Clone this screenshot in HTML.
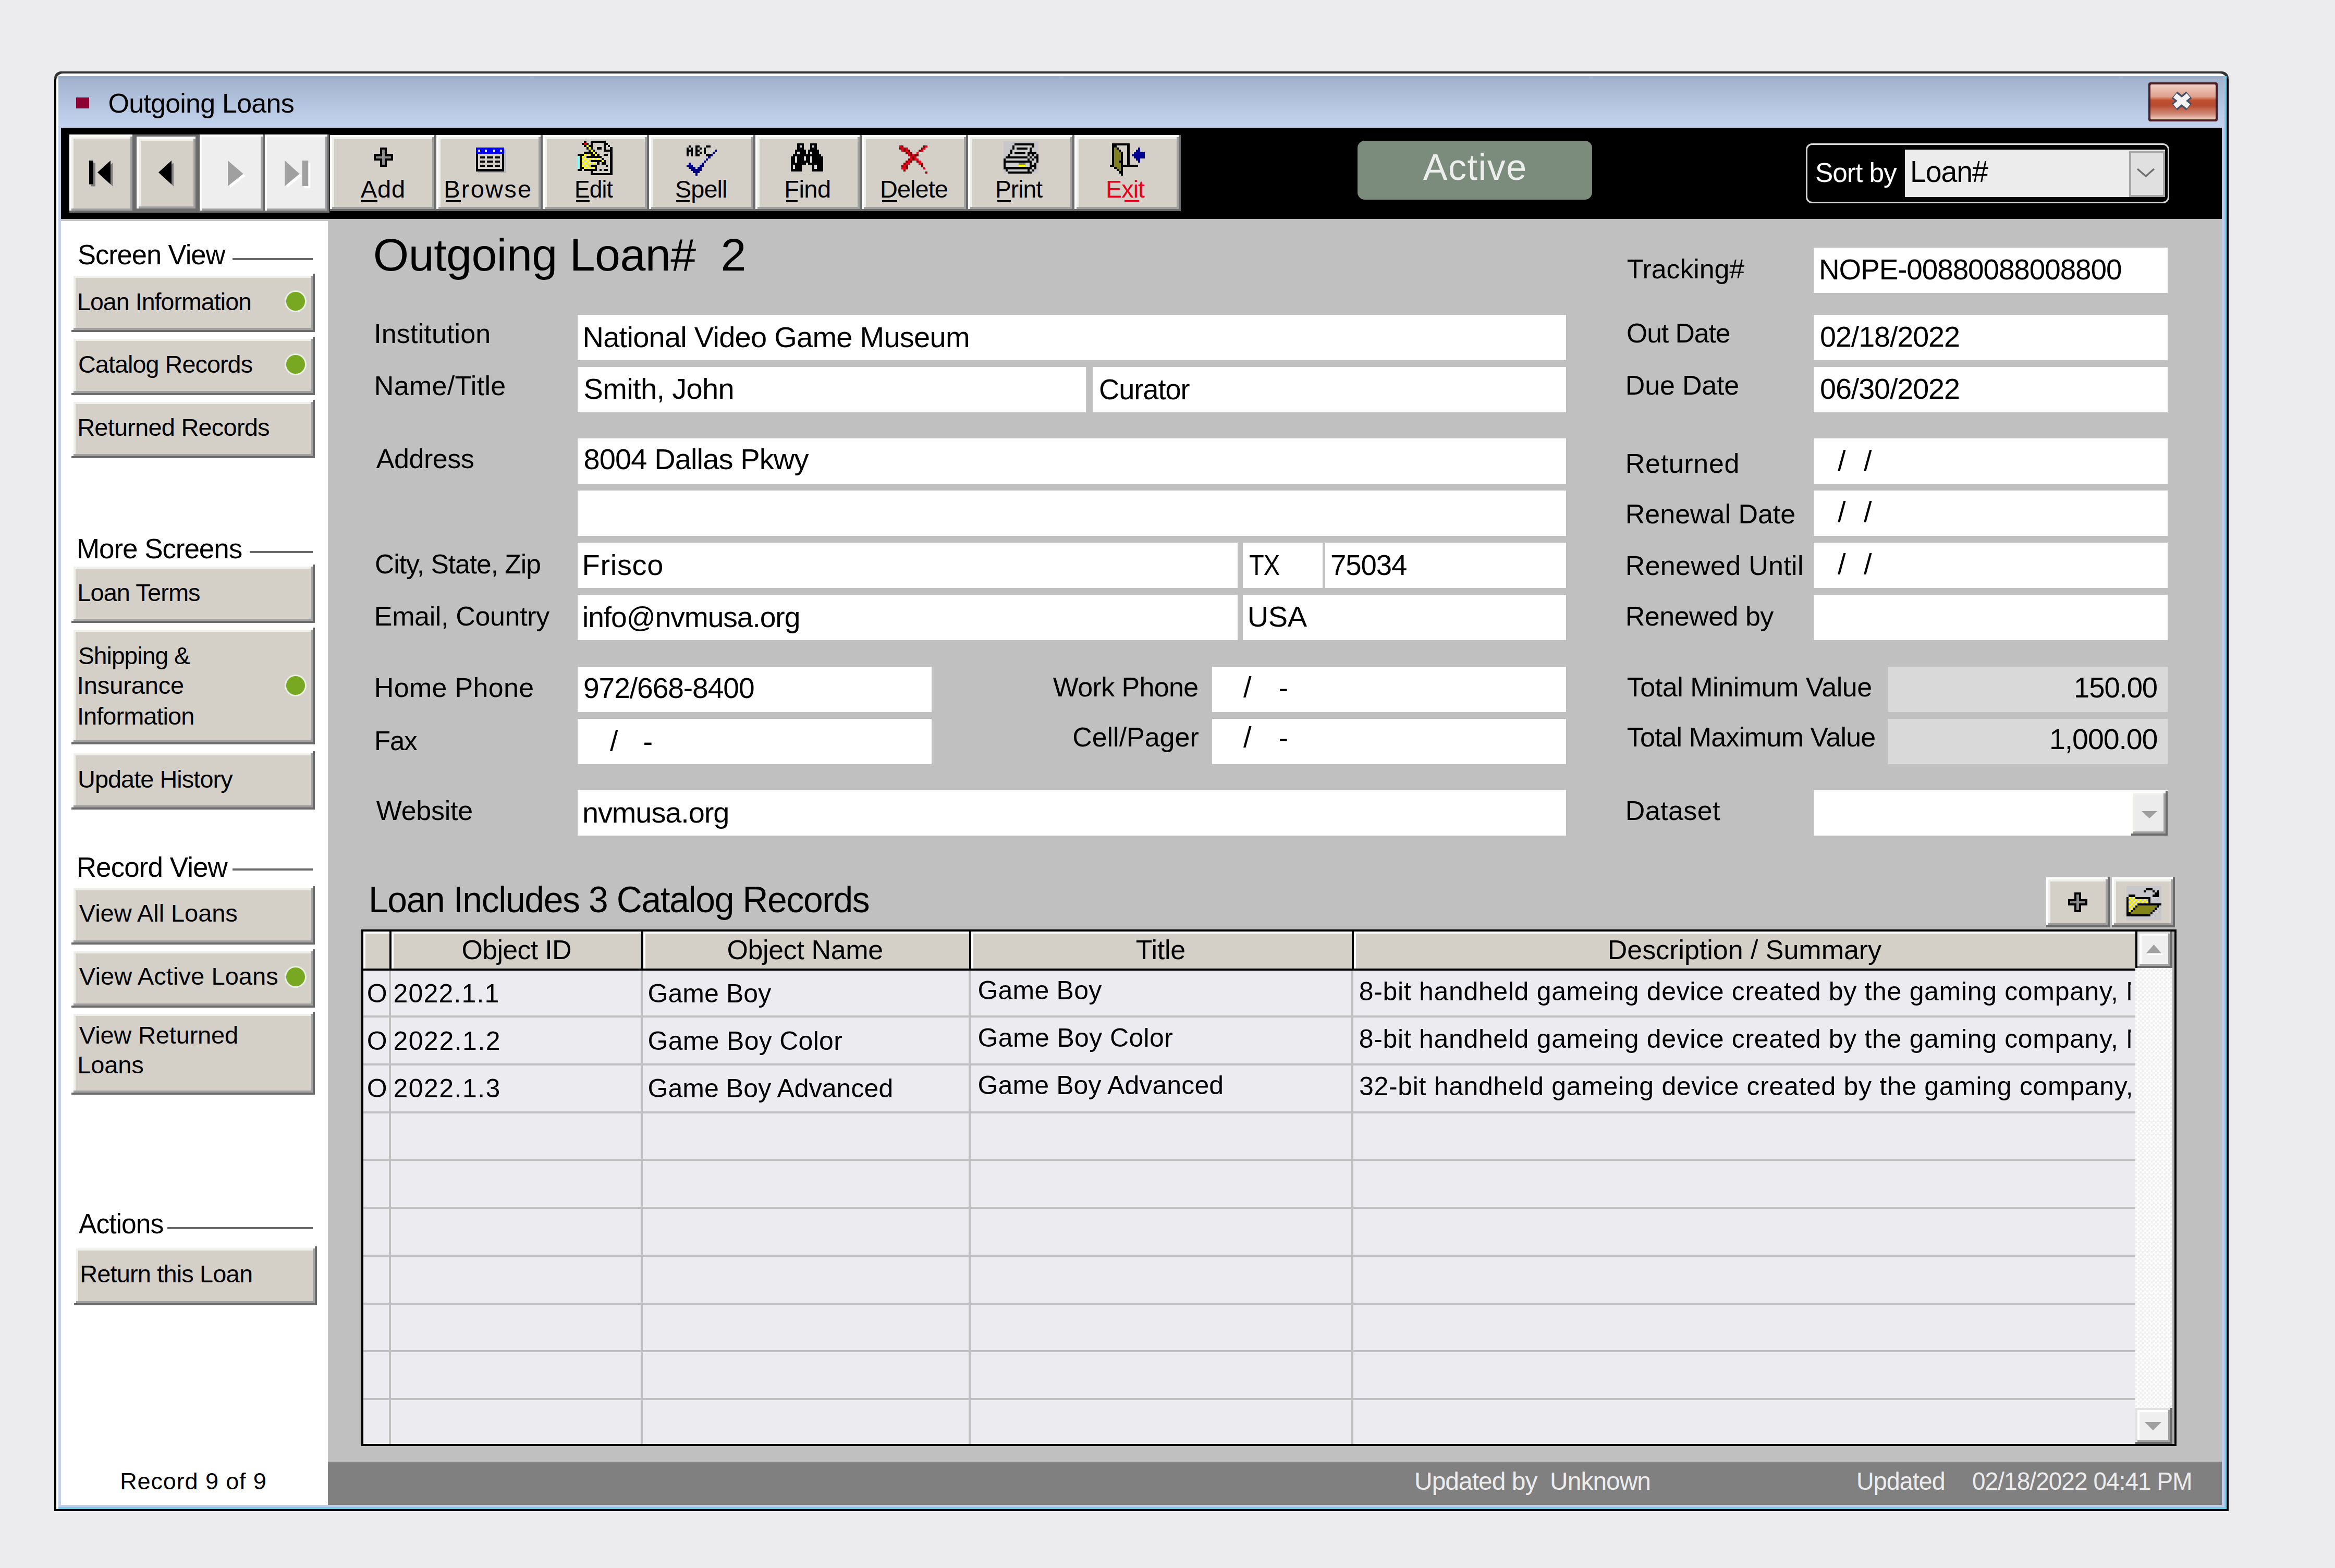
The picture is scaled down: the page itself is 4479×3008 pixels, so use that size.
<!DOCTYPE html>
<html><head><meta charset="utf-8"><style>
html,body{margin:0;padding:0;}
body{width:4479px;height:3008px;position:relative;overflow:hidden;background:#ececef;font-family:"Liberation Sans",sans-serif;}
.b{position:absolute;box-sizing:border-box;}
.t{position:absolute;line-height:1;white-space:nowrap;}
.t, .b .t{position:absolute;}
</style></head><body>
<div class="b" style="left:104px;top:137px;width:4171px;height:2762px;background:#000;border-radius:17px 17px 0 0;"></div>
<div class="b" style="left:104px;top:137px;width:4171px;height:13px;background:#333;border-radius:17px 17px 0 0;"></div>
<div class="b" style="left:108px;top:141px;width:4163px;height:2754px;background:#fff;border-radius:13px 13px 0 0;"></div>
<div class="b" style="left:112px;top:146px;width:4159px;height:2749px;background:#76cce6;"></div>
<div class="b" style="left:112px;top:146px;width:4155px;height:2745px;background:#c2cfec;"></div>
<div class="b" style="left:112px;top:146px;width:4155px;height:99px;background:linear-gradient(#a0b1cc,#c4d4ee);"></div>
<div class="b" style="left:117px;top:245px;width:4145px;height:175px;background:#000;"></div>
<div class="b" style="left:117px;top:420px;width:512px;height:2467px;background:#fff;"></div>
<div class="b" style="left:117px;top:420px;width:512px;height:4px;background:#c4c4c4;"></div>
<div class="b" style="left:629px;top:420px;width:3633px;height:2384px;background:#c0c0c0;"></div>
<div class="b" style="left:629px;top:2804px;width:3633px;height:83px;background:#808080;"></div>
<div class="b" style="left:146px;top:187px;width:25px;height:21px;background:#8c0032;"></div>
<div class="t" style="left:207.5px;top:172px;font-size:52px;letter-spacing:-0.77px;color:#000;">Outgoing Loans</div>
<div class="b" style="left:4121px;top:158px;width:133px;height:75px;background:#4a1c24;border-radius:4px;"></div>
<div class="b" style="left:4125px;top:162px;width:125px;height:67px;background:linear-gradient(#f2d0c4 0%,#dea08c 35%,#c05030 45%,#b84c30 60%,#d08a78 85%,#f0d0c0 100%);border-radius:2px;"></div>
<div class="b" style="left:133px;top:258px;width:125px;height:150px;background:#d4d0c8;box-shadow:inset -4px -4px 0 #6b6b6b, inset 4px 4px 0 #fff, inset -8px -8px 0 #a0a0a0, inset 8px 8px 0 #f0f0ea;"></div>
<div class="b" style="left:254px;top:258px;width:129px;height:150px;background:#6b6b6b;"></div>
<div class="b" style="left:262px;top:262px;width:117px;height:142px;background:#d4d0c8;box-shadow:inset -4px -4px 0 #6b6b6b, inset 4px 4px 0 #fff, inset -8px -8px 0 #a0a0a0, inset 8px 8px 0 #f0f0ea;"></div>
<div class="b" style="left:383px;top:258px;width:125px;height:150px;background:#eeeeee;box-shadow:inset -4px -4px 0 #6b6b6b, inset 4px 4px 0 #fff, inset -8px -8px 0 #a0a0a0, inset 8px 8px 0 #eeeeee;"></div>
<div class="b" style="left:508px;top:258px;width:124px;height:150px;background:#eeeeee;box-shadow:inset -4px -4px 0 #6b6b6b, inset 4px 4px 0 #fff, inset -8px -8px 0 #a0a0a0, inset 8px 8px 0 #eeeeee;"></div>
<div class="b" style="left:633px;top:259px;width:204px;height:146px;background:#d4d0c8;box-shadow:inset -4px -4px 0 #6b6b6b, inset 4px 4px 0 #fff, inset -8px -8px 0 #a0a0a0, inset 8px 8px 0 #f0f0ea;"></div>
<div class="b" style="left:837px;top:259px;width:204px;height:146px;background:#d4d0c8;box-shadow:inset -4px -4px 0 #6b6b6b, inset 4px 4px 0 #fff, inset -8px -8px 0 #a0a0a0, inset 8px 8px 0 #f0f0ea;"></div>
<div class="b" style="left:1041px;top:259px;width:204px;height:146px;background:#d4d0c8;box-shadow:inset -4px -4px 0 #6b6b6b, inset 4px 4px 0 #fff, inset -8px -8px 0 #a0a0a0, inset 8px 8px 0 #f0f0ea;"></div>
<div class="b" style="left:1245px;top:259px;width:204px;height:146px;background:#d4d0c8;box-shadow:inset -4px -4px 0 #6b6b6b, inset 4px 4px 0 #fff, inset -8px -8px 0 #a0a0a0, inset 8px 8px 0 #f0f0ea;"></div>
<div class="b" style="left:1449px;top:259px;width:204px;height:146px;background:#d4d0c8;box-shadow:inset -4px -4px 0 #6b6b6b, inset 4px 4px 0 #fff, inset -8px -8px 0 #a0a0a0, inset 8px 8px 0 #f0f0ea;"></div>
<div class="b" style="left:1653px;top:259px;width:204px;height:146px;background:#d4d0c8;box-shadow:inset -4px -4px 0 #6b6b6b, inset 4px 4px 0 #fff, inset -8px -8px 0 #a0a0a0, inset 8px 8px 0 #f0f0ea;"></div>
<div class="b" style="left:1857px;top:259px;width:204px;height:146px;background:#d4d0c8;box-shadow:inset -4px -4px 0 #6b6b6b, inset 4px 4px 0 #fff, inset -8px -8px 0 #a0a0a0, inset 8px 8px 0 #f0f0ea;"></div>
<div class="b" style="left:2061px;top:259px;width:204px;height:146px;background:#d4d0c8;box-shadow:inset -4px -4px 0 #6b6b6b, inset 4px 4px 0 #fff, inset -8px -8px 0 #a0a0a0, inset 8px 8px 0 #f0f0ea;"></div>
<div class="t" style="left:691.8px;top:339px;font-size:47px;letter-spacing:0.88px;color:#000;">Add</div>
<div class="t" style="left:851.2px;top:339px;font-size:47px;letter-spacing:2.25px;color:#000;">Browse</div>
<div class="t" style="left:1101.5px;top:339px;font-size:47px;letter-spacing:-0.94px;color:#000;transform:scaleX(0.9437);transform-origin:0 0;">Edit</div>
<div class="t" style="left:1294.8px;top:339px;font-size:47px;letter-spacing:-0.94px;color:#000;transform:scaleX(0.9975);transform-origin:0 0;">Spell</div>
<div class="t" style="left:1504.2px;top:339px;font-size:47px;letter-spacing:-0.50px;color:#000;">Find</div>
<div class="t" style="left:1688.3px;top:339px;font-size:47px;letter-spacing:-0.94px;color:#000;transform:scaleX(0.9976);transform-origin:0 0;">Delete</div>
<div class="t" style="left:1909.3px;top:339px;font-size:47px;letter-spacing:-0.94px;color:#000;transform:scaleX(0.9804);transform-origin:0 0;">Print</div>
<div class="t" style="left:2121.3px;top:339px;font-size:47px;letter-spacing:-0.94px;color:#e8001c;transform:scaleX(0.9940);transform-origin:0 0;">Exit</div>
<div class="b" style="left:2604px;top:270px;width:450px;height:113px;background:#7b8c7c;border-radius:14px;"></div>
<div class="t" style="left:2729.8px;top:286px;font-size:70px;letter-spacing:1.55px;color:#eceeec;">Active</div>
<div class="b" style="left:3464px;top:275px;width:697px;height:115px;border:3px solid #d8d8d8;border-radius:12px;box-sizing:border-box;"></div>
<div class="t" style="left:3481.5px;top:305px;font-size:52px;letter-spacing:-1.04px;color:#fff;transform:scaleX(0.9887);transform-origin:0 0;">Sort by</div>
<div class="b" style="left:3654px;top:287px;width:499px;height:91px;background:#ececec;"></div>
<div class="b" style="left:4084px;top:290px;width:69px;height:88px;background:#e0e0e0;border:4px solid #a8a8a8;box-sizing:border-box;"></div>
<div class="t" style="left:3663.5px;top:300px;font-size:58px;letter-spacing:-1.16px;color:#000;transform:scaleX(0.9564);transform-origin:0 0;">Loan#</div>
<div class="t" style="left:148.5px;top:462px;font-size:53px;letter-spacing:-1.06px;color:#000;transform:scaleX(0.9907);transform-origin:0 0;">Screen View</div>
<div class="b" style="left:446px;top:495px;width:154px;height:4px;background:#696969;"></div>
<div class="t" style="left:146.8px;top:1026px;font-size:53px;letter-spacing:-1.06px;color:#000;transform:scaleX(0.9997);transform-origin:0 0;">More Screens</div>
<div class="b" style="left:479px;top:1057px;width:121px;height:4px;background:#696969;"></div>
<div class="t" style="left:146.8px;top:1637px;font-size:53px;letter-spacing:-0.95px;color:#000;">Record View</div>
<div class="b" style="left:446px;top:1666px;width:154px;height:4px;background:#696969;"></div>
<div class="t" style="left:150.8px;top:2321px;font-size:53px;letter-spacing:-1.06px;color:#000;transform:scaleX(0.9749);transform-origin:0 0;">Actions</div>
<div class="b" style="left:321px;top:2354px;width:279px;height:4px;background:#696969;"></div>
<div class="b" style="left:137px;top:525px;width:467px;height:112px;background:#d4d0c8;box-shadow:inset -4px -4px 0 #6b6b6b, inset 4px 4px 0 #fff, inset -8px -8px 0 #a0a0a0, inset 8px 8px 0 #f0f0ea;"></div>
<div class="t" style="left:148.3px;top:555px;font-size:47px;letter-spacing:-0.94px;color:#000;transform:scaleX(0.9890);transform-origin:0 0;">Loan Information</div>
<div class="b" style="left:549px;top:560px;width:36px;height:36px;background:#78a822;border-radius:50%;box-shadow:0 0 0 3px rgba(240,250,235,0.75);"></div>
<div class="b" style="left:137px;top:646px;width:467px;height:112px;background:#d4d0c8;box-shadow:inset -4px -4px 0 #6b6b6b, inset 4px 4px 0 #fff, inset -8px -8px 0 #a0a0a0, inset 8px 8px 0 #f0f0ea;"></div>
<div class="t" style="left:149.8px;top:675px;font-size:47px;letter-spacing:-0.94px;color:#000;transform:scaleX(0.9945);transform-origin:0 0;">Catalog Records</div>
<div class="b" style="left:549px;top:681px;width:36px;height:36px;background:#78a822;border-radius:50%;box-shadow:0 0 0 3px rgba(240,250,235,0.75);"></div>
<div class="b" style="left:137px;top:767px;width:467px;height:112px;background:#d4d0c8;box-shadow:inset -4px -4px 0 #6b6b6b, inset 4px 4px 0 #fff, inset -8px -8px 0 #a0a0a0, inset 8px 8px 0 #f0f0ea;"></div>
<div class="t" style="left:148.2px;top:796px;font-size:47px;letter-spacing:-0.80px;color:#000;">Returned Records</div>
<div class="b" style="left:137px;top:1083px;width:467px;height:112px;background:#d4d0c8;box-shadow:inset -4px -4px 0 #6b6b6b, inset 4px 4px 0 #fff, inset -8px -8px 0 #a0a0a0, inset 8px 8px 0 #f0f0ea;"></div>
<div class="t" style="left:148.2px;top:1113px;font-size:47px;letter-spacing:-0.92px;color:#000;">Loan Terms</div>
<div class="b" style="left:137px;top:1204px;width:467px;height:224px;background:#d4d0c8;box-shadow:inset -4px -4px 0 #6b6b6b, inset 4px 4px 0 #fff, inset -8px -8px 0 #a0a0a0, inset 8px 8px 0 #f0f0ea;"></div>
<div class="t" style="left:149.8px;top:1234px;font-size:47px;letter-spacing:-0.94px;color:#000;transform:scaleX(0.9813);transform-origin:0 0;">Shipping &amp;</div>
<div class="t" style="left:147.8px;top:1291px;font-size:47px;letter-spacing:-0.12px;color:#000;">Insurance</div>
<div class="t" style="left:147.8px;top:1350px;font-size:47px;letter-spacing:-0.94px;color:#000;transform:scaleX(0.9984);transform-origin:0 0;">Information</div>
<div class="b" style="left:549px;top:1297px;width:36px;height:36px;background:#78a822;border-radius:50%;box-shadow:0 0 0 3px rgba(240,250,235,0.75);"></div>
<div class="b" style="left:137px;top:1441px;width:467px;height:112px;background:#d4d0c8;box-shadow:inset -4px -4px 0 #6b6b6b, inset 4px 4px 0 #fff, inset -8px -8px 0 #a0a0a0, inset 8px 8px 0 #f0f0ea;"></div>
<div class="t" style="left:148.5px;top:1471px;font-size:47px;letter-spacing:-0.94px;color:#000;transform:scaleX(0.9965);transform-origin:0 0;">Update History</div>
<div class="b" style="left:137px;top:1700px;width:467px;height:112px;background:#d4d0c8;box-shadow:inset -4px -4px 0 #6b6b6b, inset 4px 4px 0 #fff, inset -8px -8px 0 #a0a0a0, inset 8px 8px 0 #f0f0ea;"></div>
<div class="t" style="left:151.8px;top:1728px;font-size:47px;letter-spacing:-0.06px;color:#000;">View All Loans</div>
<div class="b" style="left:137px;top:1821px;width:467px;height:112px;background:#d4d0c8;box-shadow:inset -4px -4px 0 #6b6b6b, inset 4px 4px 0 #fff, inset -8px -8px 0 #a0a0a0, inset 8px 8px 0 #f0f0ea;"></div>
<div class="t" style="left:151.8px;top:1849px;font-size:47px;letter-spacing:0.09px;color:#000;">View Active Loans</div>
<div class="b" style="left:549px;top:1856px;width:36px;height:36px;background:#78a822;border-radius:50%;box-shadow:0 0 0 3px rgba(240,250,235,0.75);"></div>
<div class="b" style="left:137px;top:1941px;width:467px;height:159px;background:#d4d0c8;box-shadow:inset -4px -4px 0 #6b6b6b, inset 4px 4px 0 #fff, inset -8px -8px 0 #a0a0a0, inset 8px 8px 0 #f0f0ea;"></div>
<div class="t" style="left:151.8px;top:1962px;font-size:47px;letter-spacing:-0.17px;color:#000;">View Returned</div>
<div class="t" style="left:148.2px;top:2019px;font-size:47px;letter-spacing:-0.12px;color:#000;">Loans</div>
<div class="b" style="left:142px;top:2391px;width:466px;height:113px;background:#d4d0c8;box-shadow:inset -4px -4px 0 #6b6b6b, inset 4px 4px 0 #fff, inset -8px -8px 0 #a0a0a0, inset 8px 8px 0 #f0f0ea;"></div>
<div class="t" style="left:153.2px;top:2420px;font-size:47px;letter-spacing:-0.87px;color:#000;">Return this Loan</div>
<div class="t" style="left:230.2px;top:2819px;font-size:45px;letter-spacing:0.88px;color:#000;">Record 9 of 9</div>
<div class="t" style="left:715.8px;top:445px;font-size:88px;letter-spacing:-0.53px;color:#000;white-space:pre;">Outgoing Loan#  2</div>
<div class="t" style="left:717.2px;top:614px;font-size:52px;letter-spacing:0.15px;color:#000;">Institution</div>
<div class="t" style="left:717.8px;top:714px;font-size:52px;letter-spacing:0.33px;color:#000;">Name/Title</div>
<div class="t" style="left:721.8px;top:854px;font-size:52px;letter-spacing:-0.46px;color:#000;">Address</div>
<div class="t" style="left:719.3px;top:1056px;font-size:52px;letter-spacing:-1.04px;color:#000;transform:scaleX(0.9916);transform-origin:0 0;">City, State, Zip</div>
<div class="t" style="left:717.8px;top:1156px;font-size:52px;letter-spacing:-0.35px;color:#000;">Email, Country</div>
<div class="t" style="left:717.8px;top:1293px;font-size:52px;letter-spacing:0.33px;color:#000;">Home Phone</div>
<div class="t" style="left:717.8px;top:1395px;font-size:52px;letter-spacing:-1.04px;color:#000;transform:scaleX(0.9790);transform-origin:0 0;">Fax</div>
<div class="t" style="left:721.8px;top:1529px;font-size:52px;letter-spacing:-0.25px;color:#000;">Website</div>
<div class="t" style="left:2019.8px;top:1292px;font-size:52px;letter-spacing:-0.64px;color:#000;">Work Phone</div>
<div class="t" style="left:2057.2px;top:1388px;font-size:52px;letter-spacing:-0.03px;color:#000;">Cell/Pager</div>
<div class="b" style="left:1108px;top:604px;width:1896px;height:87px;background:#fff;"></div>
<div class="b" style="left:1108px;top:704px;width:975px;height:87px;background:#fff;"></div>
<div class="b" style="left:2096px;top:704px;width:908px;height:87px;background:#fff;"></div>
<div class="b" style="left:1108px;top:841px;width:1896px;height:87px;background:#fff;"></div>
<div class="b" style="left:1108px;top:941px;width:1896px;height:87px;background:#fff;"></div>
<div class="b" style="left:1108px;top:1041px;width:1266px;height:87px;background:#fff;"></div>
<div class="b" style="left:2384px;top:1041px;width:153px;height:87px;background:#fff;"></div>
<div class="b" style="left:2542px;top:1041px;width:462px;height:87px;background:#fff;"></div>
<div class="b" style="left:1108px;top:1141px;width:1266px;height:87px;background:#fff;"></div>
<div class="b" style="left:2384px;top:1141px;width:620px;height:87px;background:#fff;"></div>
<div class="b" style="left:1108px;top:1279px;width:679px;height:87px;background:#fff;"></div>
<div class="b" style="left:1108px;top:1379px;width:679px;height:87px;background:#fff;"></div>
<div class="b" style="left:2325px;top:1279px;width:679px;height:87px;background:#fff;"></div>
<div class="b" style="left:2325px;top:1379px;width:679px;height:87px;background:#fff;"></div>
<div class="b" style="left:1108px;top:1516px;width:1896px;height:87px;background:#fff;"></div>
<div class="t" style="left:1117.5px;top:619px;font-size:56px;letter-spacing:-0.74px;color:#000;">National Video Game Museum</div>
<div class="t" style="left:1119.5px;top:718px;font-size:56px;letter-spacing:-0.65px;color:#000;">Smith, John</div>
<div class="t" style="left:2108.3px;top:719px;font-size:56px;letter-spacing:-1.12px;color:#000;transform:scaleX(0.9700);transform-origin:0 0;">Curator</div>
<div class="t" style="left:1119.5px;top:853px;font-size:56px;letter-spacing:-0.88px;color:#000;">8004 Dallas Pkwy</div>
<div class="t" style="left:1116.5px;top:1056px;font-size:56px;letter-spacing:0.70px;color:#000;">Frisco</div>
<div class="t" style="left:2396.0px;top:1056px;font-size:56px;letter-spacing:-1.12px;color:#000;transform:scaleX(0.8397);transform-origin:0 0;">TX</div>
<div class="t" style="left:2552.3px;top:1056px;font-size:56px;letter-spacing:-1.12px;color:#000;transform:scaleX(0.9743);transform-origin:0 0;">75034</div>
<div class="t" style="left:1117.3px;top:1156px;font-size:56px;letter-spacing:-1.12px;color:#000;transform:scaleX(0.9866);transform-origin:0 0;">info@nvmusa.org</div>
<div class="t" style="left:2392.8px;top:1155px;font-size:56px;letter-spacing:-0.38px;color:#000;">USA</div>
<div class="t" style="left:1118.5px;top:1292px;font-size:56px;letter-spacing:-1.12px;color:#000;transform:scaleX(0.9858);transform-origin:0 0;">972/668-8400</div>
<div class="t" style="left:1117.3px;top:1531px;font-size:56px;letter-spacing:-1.12px;color:#000;transform:scaleX(0.9994);transform-origin:0 0;">nvmusa.org</div>
<div class="t" style="left:1170.0px;top:1393px;font-size:56px;letter-spacing:0.00px;color:#000;">/</div>
<div class="t" style="left:1233.5px;top:1395px;font-size:56px;letter-spacing:0.00px;color:#000;">-</div>
<div class="t" style="left:2385.0px;top:1290px;font-size:56px;letter-spacing:0.00px;color:#000;">/</div>
<div class="t" style="left:2452.5px;top:1292px;font-size:56px;letter-spacing:0.00px;color:#000;">-</div>
<div class="t" style="left:2385.0px;top:1386px;font-size:56px;letter-spacing:0.00px;color:#000;">/</div>
<div class="t" style="left:2452.5px;top:1388px;font-size:56px;letter-spacing:0.00px;color:#000;">-</div>
<div class="t" style="left:3120.8px;top:490px;font-size:52px;letter-spacing:-0.12px;color:#000;">Tracking#</div>
<div class="t" style="left:3119.5px;top:613px;font-size:52px;letter-spacing:-1.04px;color:#000;transform:scaleX(0.9938);transform-origin:0 0;">Out Date</div>
<div class="t" style="left:3117.8px;top:713px;font-size:52px;letter-spacing:-0.18px;color:#000;">Due Date</div>
<div class="t" style="left:3117.8px;top:863px;font-size:52px;letter-spacing:0.68px;color:#000;">Returned</div>
<div class="t" style="left:3117.8px;top:960px;font-size:52px;letter-spacing:-0.02px;color:#000;">Renewal Date</div>
<div class="t" style="left:3117.8px;top:1059px;font-size:52px;letter-spacing:0.29px;color:#000;">Renewed Until</div>
<div class="t" style="left:3117.8px;top:1156px;font-size:52px;letter-spacing:-0.50px;color:#000;">Renewed by</div>
<div class="t" style="left:3120.8px;top:1292px;font-size:52px;letter-spacing:-0.47px;color:#000;">Total Minimum Value</div>
<div class="t" style="left:3120.8px;top:1388px;font-size:52px;letter-spacing:-0.88px;color:#000;">Total Maximum Value</div>
<div class="t" style="left:3117.8px;top:1529px;font-size:52px;letter-spacing:0.42px;color:#000;">Dataset</div>
<div class="b" style="left:3479px;top:475px;width:679px;height:87px;background:#fff;"></div>
<div class="b" style="left:3479px;top:604px;width:679px;height:87px;background:#fff;"></div>
<div class="b" style="left:3479px;top:704px;width:679px;height:87px;background:#fff;"></div>
<div class="b" style="left:3479px;top:841px;width:679px;height:87px;background:#fff;"></div>
<div class="b" style="left:3479px;top:941px;width:679px;height:87px;background:#fff;"></div>
<div class="b" style="left:3479px;top:1041px;width:679px;height:87px;background:#fff;"></div>
<div class="b" style="left:3479px;top:1141px;width:679px;height:87px;background:#fff;"></div>
<div class="b" style="left:3621px;top:1279px;width:537px;height:87px;background:#d9d9d9;"></div>
<div class="b" style="left:3621px;top:1379px;width:537px;height:87px;background:#d9d9d9;"></div>
<div class="b" style="left:3479px;top:1516px;width:679px;height:87px;background:#fff;"></div>
<div class="b" style="left:4088px;top:1518px;width:70px;height:85px;background:#ececec;box-shadow:inset -4px -4px 0 #6b6b6b, inset 4px 4px 0 #fff, inset -8px -8px 0 #a0a0a0, inset 8px 8px 0 #f0f0ea;"></div>
<div class="t" style="left:3488.6px;top:489px;font-size:56px;letter-spacing:-1.12px;color:#000;transform:scaleX(0.9802);transform-origin:0 0;">NOPE-00880088008800</div>
<div class="t" style="left:3490.8px;top:618px;font-size:56px;letter-spacing:-1.12px;color:#000;transform:scaleX(0.9956);transform-origin:0 0;">02/18/2022</div>
<div class="t" style="left:3490.8px;top:718px;font-size:56px;letter-spacing:-1.12px;color:#000;transform:scaleX(0.9956);transform-origin:0 0;">06/30/2022</div>
<div class="t" style="left:3525.0px;top:856px;font-size:56px;letter-spacing:0.00px;color:#000;">/</div>
<div class="t" style="left:3575.0px;top:856px;font-size:56px;letter-spacing:0.00px;color:#000;">/</div>
<div class="t" style="left:3525.0px;top:954px;font-size:56px;letter-spacing:0.00px;color:#000;">/</div>
<div class="t" style="left:3575.0px;top:954px;font-size:56px;letter-spacing:0.00px;color:#000;">/</div>
<div class="t" style="left:3525.0px;top:1054px;font-size:56px;letter-spacing:0.00px;color:#000;">/</div>
<div class="t" style="left:3575.0px;top:1054px;font-size:56px;letter-spacing:0.00px;color:#000;">/</div>
<div class="t" style="left:3977.9px;top:1291px;font-size:56px;letter-spacing:-1.12px;color:#000;transform:scaleX(0.9724);transform-origin:0 0;">150.00</div>
<div class="t" style="left:3930.8px;top:1390px;font-size:56px;letter-spacing:-1.12px;color:#000;transform:scaleX(0.9918);transform-origin:0 0;">1,000.00</div>
<div class="t" style="left:706.5px;top:1690px;font-size:71px;letter-spacing:-1.42px;color:#000;transform:scaleX(0.9548);transform-origin:0 0;">Loan Includes 3 Catalog Records</div>
<div class="b" style="left:3925px;top:1683px;width:122px;height:96px;background:#d4d0c8;box-shadow:inset -4px -4px 0 #6b6b6b, inset 4px 4px 0 #fff, inset -8px -8px 0 #a0a0a0, inset 8px 8px 0 #f0f0ea;"></div>
<div class="b" style="left:4051px;top:1683px;width:121px;height:96px;background:#d4d0c8;box-shadow:inset -4px -4px 0 #6b6b6b, inset 4px 4px 0 #fff, inset -8px -8px 0 #a0a0a0, inset 8px 8px 0 #f0f0ea;"></div>
<div class="b" style="left:693px;top:1783px;width:3482px;height:991px;background:#000;"></div>
<div class="b" style="left:697px;top:1787px;width:3399px;height:983px;background:#ececf0;"></div>
<div class="b" style="left:697px;top:1787px;width:3399px;height:71px;background:#d4d0c8;"></div>
<div class="b" style="left:697px;top:1858px;width:3399px;height:4px;background:#000;"></div>
<div class="b" style="left:4096px;top:1787px;width:4px;height:75px;background:#000;"></div>
<div class="b" style="left:697px;top:1787px;width:50px;height:4px;background:#fff;"></div>
<div class="b" style="left:697px;top:1787px;width:4px;height:71px;background:#fff;"></div>
<div class="b" style="left:751px;top:1787px;width:479px;height:4px;background:#fff;"></div>
<div class="b" style="left:751px;top:1787px;width:4px;height:71px;background:#fff;"></div>
<div class="b" style="left:1234px;top:1787px;width:625px;height:4px;background:#fff;"></div>
<div class="b" style="left:1234px;top:1787px;width:4px;height:71px;background:#fff;"></div>
<div class="b" style="left:1863px;top:1787px;width:730px;height:4px;background:#fff;"></div>
<div class="b" style="left:1863px;top:1787px;width:4px;height:71px;background:#fff;"></div>
<div class="b" style="left:2597px;top:1787px;width:1499px;height:4px;background:#fff;"></div>
<div class="b" style="left:2597px;top:1787px;width:4px;height:71px;background:#fff;"></div>
<div class="b" style="left:747px;top:1787px;width:4px;height:75px;background:#000;"></div>
<div class="b" style="left:746px;top:1862px;width:4px;height:908px;background:#c0c0c0;"></div>
<div class="b" style="left:1230px;top:1787px;width:4px;height:75px;background:#000;"></div>
<div class="b" style="left:1229px;top:1862px;width:4px;height:908px;background:#c0c0c0;"></div>
<div class="b" style="left:1859px;top:1787px;width:4px;height:75px;background:#000;"></div>
<div class="b" style="left:1858px;top:1862px;width:4px;height:908px;background:#c0c0c0;"></div>
<div class="b" style="left:2593px;top:1787px;width:4px;height:75px;background:#000;"></div>
<div class="b" style="left:2592px;top:1862px;width:4px;height:908px;background:#c0c0c0;"></div>
<div class="b" style="left:697px;top:1948px;width:3399px;height:4px;background:#c0c0c0;"></div>
<div class="b" style="left:697px;top:2040px;width:3399px;height:4px;background:#c0c0c0;"></div>
<div class="b" style="left:697px;top:2132px;width:3399px;height:4px;background:#c0c0c0;"></div>
<div class="b" style="left:697px;top:2223px;width:3399px;height:4px;background:#c0c0c0;"></div>
<div class="b" style="left:697px;top:2315px;width:3399px;height:4px;background:#c0c0c0;"></div>
<div class="b" style="left:697px;top:2407px;width:3399px;height:4px;background:#c0c0c0;"></div>
<div class="b" style="left:697px;top:2499px;width:3399px;height:4px;background:#c0c0c0;"></div>
<div class="b" style="left:697px;top:2590px;width:3399px;height:4px;background:#c0c0c0;"></div>
<div class="b" style="left:697px;top:2682px;width:3399px;height:4px;background:#c0c0c0;"></div>
<div class="t" style="left:885.5px;top:1796px;font-size:52px;letter-spacing:-0.72px;color:#000;">Object ID</div>
<div class="t" style="left:1394.5px;top:1796px;font-size:52px;letter-spacing:-0.38px;color:#000;">Object Name</div>
<div class="t" style="left:2178.8px;top:1796px;font-size:52px;letter-spacing:-0.25px;color:#000;">Title</div>
<div class="t" style="left:3083.8px;top:1796px;font-size:52px;letter-spacing:-0.03px;color:#000;">Description / Summary</div>
<div class="t" style="left:703.8px;top:1881px;font-size:50px;letter-spacing:0.00px;color:#000;">O</div>
<div class="t" style="left:754.5px;top:1881px;font-size:50px;letter-spacing:1.18px;color:#000;">2022.1.1</div>
<div class="t" style="left:1242.5px;top:1881px;font-size:50px;letter-spacing:0.07px;color:#000;">Game Boy</div>
<div class="t" style="left:1875.5px;top:1875px;font-size:50px;letter-spacing:0.21px;color:#000;">Game Boy</div>
<div class="t" style="left:703.8px;top:1972px;font-size:50px;letter-spacing:0.00px;color:#000;">O</div>
<div class="t" style="left:754.5px;top:1972px;font-size:50px;letter-spacing:1.50px;color:#000;">2022.1.2</div>
<div class="t" style="left:1242.5px;top:1972px;font-size:50px;letter-spacing:0.29px;color:#000;">Game Boy Color</div>
<div class="t" style="left:1875.5px;top:1966px;font-size:50px;letter-spacing:0.37px;color:#000;">Game Boy Color</div>
<div class="t" style="left:703.8px;top:2063px;font-size:50px;letter-spacing:0.00px;color:#000;">O</div>
<div class="t" style="left:754.5px;top:2063px;font-size:50px;letter-spacing:1.46px;color:#000;">2022.1.3</div>
<div class="t" style="left:1242.5px;top:2063px;font-size:50px;letter-spacing:0.06px;color:#000;">Game Boy Advanced</div>
<div class="t" style="left:1875.5px;top:2057px;font-size:50px;letter-spacing:0.12px;color:#000;">Game Boy Advanced</div>
<div class="b" style="left:2597px;top:1862px;width:1490px;height:300px;overflow:hidden">
<div class="t" style="left:9.8px;top:15px;font-size:50px;letter-spacing:0.67px;color:#000;">8-bit handheld gameing device created by the gaming company, N</div><div class="t" style="left:9.8px;top:106px;font-size:50px;letter-spacing:0.67px;color:#000;">8-bit handheld gameing device created by the gaming company, N</div><div class="t" style="left:10.0px;top:197px;font-size:50px;letter-spacing:0.67px;color:#000;">32-bit handheld gameing device created by the gaming company, N</div></div>
<div class="b" style="left:4096px;top:1857px;width:71px;height:913px;background:repeating-conic-gradient(#fff 0 25%,#efefef 0 50%) 0 0/8.3px 8.3px;"></div>
<div class="b" style="left:4167px;top:1787px;width:4px;height:983px;background:#b0b0b0;"></div>
<div class="b" style="left:4100px;top:1787px;width:67px;height:70px;background:#efefef;box-shadow:inset -4px -4px 0 #6b6b6b, inset 4px 4px 0 #e2e2e2, inset -8px -8px 0 #a0a0a0, inset 8px 8px 0 #fff;"></div>
<div class="b" style="left:4096px;top:2701px;width:71px;height:69px;background:#efefef;box-shadow:inset -4px -4px 0 #6b6b6b, inset 4px 4px 0 #e2e2e2, inset -8px -8px 0 #a0a0a0, inset 8px 8px 0 #fff;"></div>
<div class="t" style="left:2713.3px;top:2818px;font-size:48px;letter-spacing:-0.96px;color:#ececec;transform:scaleX(0.9978);transform-origin:0 0;white-space:pre;">Updated by  Unknown</div>
<div class="t" style="left:3561.4px;top:2818px;font-size:48px;letter-spacing:-0.96px;color:#ececec;transform:scaleX(0.9719);transform-origin:0 0;">Updated</div>
<div class="t" style="left:3783.3px;top:2818px;font-size:48px;letter-spacing:-0.96px;color:#ececec;transform:scaleX(0.9565);transform-origin:0 0;white-space:pre;">02/18/2022 04:41 PM</div>
<svg style="position:absolute;left:160px;top:300px;overflow:visible" width="80" height="70" viewBox="0 0 80 70"><g fill="#808080"><rect x="15" y="12" width="8" height="45.5"/><polygon points="56.5,12 31,34.7 56.5,57.5"/></g><g fill="#000"><rect x="11" y="8" width="8" height="45.5"/><polygon points="52,8 27,30.7 52,53.5"/></g></svg>
<svg style="position:absolute;left:290px;top:300px;overflow:visible" width="60" height="70" viewBox="0 0 60 70"><polygon fill="#808080" points="43,12 18,34.7 43,57.5"/><polygon fill="#000" points="39,8 14,30.7 39,53.5"/></svg>
<svg style="position:absolute;left:420px;top:300px;overflow:visible" width="60" height="70" viewBox="0 0 60 70"><polygon fill="#fff" points="21,12 50.7,37.5 21,61"/><polygon fill="#a0a0a0" points="17,8 46.7,33.5 17,57"/></svg>
<svg style="position:absolute;left:530px;top:300px;overflow:visible" width="70" height="70" viewBox="0 0 70 70"><g fill="#fff"><polygon points="20,12 48.6,37.5 20,61"/><rect x="53.7" y="12" width="11.6" height="49"/></g><g fill="#a0a0a0"><polygon points="16.3,8 44.6,33.5 16.3,57"/><rect x="49.7" y="8" width="11.6" height="49"/></g></svg>
<div class="b" style="left:729px;top:283px;width:13px;height:37px;background:#000"></div>
<div class="b" style="left:717px;top:295px;width:37px;height:13px;background:#000"></div>
<div class="b" style="left:733px;top:287px;width:5px;height:29px;background:#8c8c8c"></div>
<div class="b" style="left:721px;top:300px;width:29px;height:4px;background:#8c8c8c"></div>
<div class="b" style="left:917px;top:287px;width:54px;height:45px;background:#b8b8b8"></div>
<svg style="position:absolute;left:912.5px;top:283.0px;overflow:visible" width="53.8" height="45.5" viewBox="0 0 13 11" preserveAspectRatio="none" shape-rendering="crispEdges"><rect x="0" y="0" width="13" height="1" fill="#0000ff"/><rect x="0" y="1" width="1" height="1" fill="#0000ff"/><rect x="1" y="1" width="1" height="1" fill="#e8e8c8"/><rect x="2" y="1" width="2" height="1" fill="#0000ff"/><rect x="4" y="1" width="1" height="1" fill="#e8e8c8"/><rect x="5" y="1" width="3" height="1" fill="#0000ff"/><rect x="8" y="1" width="1" height="1" fill="#e8e8c8"/><rect x="9" y="1" width="2" height="1" fill="#0000ff"/><rect x="11" y="1" width="1" height="1" fill="#e8e8c8"/><rect x="12" y="1" width="1" height="1" fill="#0000ff"/><rect x="0" y="2" width="13" height="1" fill="#0000ff"/><rect x="0" y="3" width="1" height="1" fill="#000"/><rect x="1" y="3" width="11" height="1" fill="#d4d0c8"/><rect x="12" y="3" width="1" height="1" fill="#000"/><rect x="0" y="4" width="1" height="1" fill="#000"/><rect x="1" y="4" width="1" height="1" fill="#d4d0c8"/><rect x="2" y="4" width="2" height="1" fill="#000"/><rect x="4" y="4" width="1" height="1" fill="#d4d0c8"/><rect x="5" y="4" width="3" height="1" fill="#000"/><rect x="8" y="4" width="1" height="1" fill="#d4d0c8"/><rect x="9" y="4" width="2" height="1" fill="#000"/><rect x="11" y="4" width="1" height="1" fill="#d4d0c8"/><rect x="12" y="4" width="1" height="1" fill="#000"/><rect x="0" y="5" width="1" height="1" fill="#000"/><rect x="1" y="5" width="11" height="1" fill="#d4d0c8"/><rect x="12" y="5" width="1" height="1" fill="#000"/><rect x="0" y="6" width="1" height="1" fill="#000"/><rect x="1" y="6" width="1" height="1" fill="#d4d0c8"/><rect x="2" y="6" width="2" height="1" fill="#000"/><rect x="4" y="6" width="1" height="1" fill="#d4d0c8"/><rect x="5" y="6" width="3" height="1" fill="#000"/><rect x="8" y="6" width="1" height="1" fill="#d4d0c8"/><rect x="9" y="6" width="2" height="1" fill="#000"/><rect x="11" y="6" width="1" height="1" fill="#d4d0c8"/><rect x="12" y="6" width="1" height="1" fill="#000"/><rect x="0" y="7" width="1" height="1" fill="#000"/><rect x="1" y="7" width="11" height="1" fill="#d4d0c8"/><rect x="12" y="7" width="1" height="1" fill="#000"/><rect x="0" y="8" width="1" height="1" fill="#000"/><rect x="1" y="8" width="1" height="1" fill="#d4d0c8"/><rect x="2" y="8" width="2" height="1" fill="#000"/><rect x="4" y="8" width="1" height="1" fill="#d4d0c8"/><rect x="5" y="8" width="3" height="1" fill="#000"/><rect x="8" y="8" width="1" height="1" fill="#d4d0c8"/><rect x="9" y="8" width="2" height="1" fill="#000"/><rect x="11" y="8" width="1" height="1" fill="#d4d0c8"/><rect x="12" y="8" width="1" height="1" fill="#000"/><rect x="0" y="9" width="1" height="1" fill="#000"/><rect x="1" y="9" width="11" height="1" fill="#d4d0c8"/><rect x="12" y="9" width="1" height="1" fill="#000"/><rect x="0" y="10" width="13" height="1" fill="#000"/></svg>
<svg style="position:absolute;left:1108.2px;top:270.4px;overflow:visible" width="66.5" height="66.3" viewBox="0 0 16 16" preserveAspectRatio="none" shape-rendering="crispEdges"><rect x="0" y="0" width="3" height="1" fill="#d4d0c8"/><rect x="3" y="0" width="1" height="1" fill="#000"/><rect x="4" y="0" width="2" height="1" fill="#d4d0c8"/><rect x="6" y="0" width="7" height="1" fill="#000"/><rect x="13" y="0" width="3" height="1" fill="#d4d0c8"/><rect x="0" y="1" width="2" height="1" fill="#d4d0c8"/><rect x="2" y="1" width="1" height="1" fill="#000"/><rect x="3" y="1" width="1" height="1" fill="#e8001c"/><rect x="4" y="1" width="1" height="1" fill="#000"/><rect x="5" y="1" width="1" height="1" fill="#d4d0c8"/><rect x="6" y="1" width="1" height="1" fill="#000"/><rect x="7" y="1" width="5" height="1" fill="#d4d0c8"/><rect x="12" y="1" width="2" height="1" fill="#000"/><rect x="14" y="1" width="2" height="1" fill="#d4d0c8"/><rect x="0" y="2" width="3" height="1" fill="#d4d0c8"/><rect x="3" y="2" width="1" height="1" fill="#000"/><rect x="4" y="2" width="1" height="1" fill="#ffff00"/><rect x="5" y="2" width="2" height="1" fill="#000"/><rect x="7" y="2" width="5" height="1" fill="#d4d0c8"/><rect x="12" y="2" width="1" height="1" fill="#000"/><rect x="13" y="2" width="1" height="1" fill="#d4d0c8"/><rect x="14" y="2" width="1" height="1" fill="#000"/><rect x="15" y="2" width="1" height="1" fill="#d4d0c8"/><rect x="0" y="3" width="4" height="1" fill="#d4d0c8"/><rect x="4" y="3" width="1" height="1" fill="#000"/><rect x="5" y="3" width="1" height="1" fill="#ffff00"/><rect x="6" y="3" width="1" height="1" fill="#000"/><rect x="7" y="3" width="2" height="1" fill="#d4d0c8"/><rect x="9" y="3" width="2" height="1" fill="#000"/><rect x="11" y="3" width="1" height="1" fill="#d4d0c8"/><rect x="12" y="3" width="1" height="1" fill="#000"/><rect x="13" y="3" width="2" height="1" fill="#d4d0c8"/><rect x="15" y="3" width="1" height="1" fill="#000"/><rect x="0" y="4" width="5" height="1" fill="#d4d0c8"/><rect x="5" y="4" width="1" height="1" fill="#000"/><rect x="6" y="4" width="1" height="1" fill="#ffff00"/><rect x="7" y="4" width="1" height="1" fill="#000"/><rect x="8" y="4" width="4" height="1" fill="#d4d0c8"/><rect x="12" y="4" width="4" height="1" fill="#000"/><rect x="0" y="5" width="3" height="1" fill="#d4d0c8"/><rect x="3" y="5" width="4" height="1" fill="#000"/><rect x="7" y="5" width="1" height="1" fill="#ffff00"/><rect x="8" y="5" width="1" height="1" fill="#000"/><rect x="9" y="5" width="6" height="1" fill="#d4d0c8"/><rect x="15" y="5" width="1" height="1" fill="#000"/><rect x="0" y="6" width="3" height="1" fill="#000"/><rect x="3" y="6" width="1" height="1" fill="#ffff00"/><rect x="4" y="6" width="1" height="1" fill="#d4d0c8"/><rect x="5" y="6" width="1" height="1" fill="#ffff00"/><rect x="6" y="6" width="2" height="1" fill="#000"/><rect x="8" y="6" width="1" height="1" fill="#ffff00"/><rect x="9" y="6" width="1" height="1" fill="#000"/><rect x="10" y="6" width="2" height="1" fill="#d4d0c8"/><rect x="12" y="6" width="2" height="1" fill="#000"/><rect x="14" y="6" width="1" height="1" fill="#d4d0c8"/><rect x="15" y="6" width="1" height="1" fill="#000"/><rect x="0" y="7" width="1" height="1" fill="#80ffff"/><rect x="1" y="7" width="1" height="1" fill="#000"/><rect x="2" y="7" width="1" height="1" fill="#ffff00"/><rect x="3" y="7" width="1" height="1" fill="#d4d0c8"/><rect x="4" y="7" width="7" height="1" fill="#000"/><rect x="11" y="7" width="4" height="1" fill="#d4d0c8"/><rect x="15" y="7" width="1" height="1" fill="#000"/><rect x="0" y="8" width="1" height="1" fill="#80ffff"/><rect x="1" y="8" width="1" height="1" fill="#000"/><rect x="2" y="8" width="1" height="1" fill="#d4d0c8"/><rect x="3" y="8" width="1" height="1" fill="#ffff00"/><rect x="4" y="8" width="1" height="1" fill="#d4d0c8"/><rect x="5" y="8" width="1" height="1" fill="#ffff00"/><rect x="6" y="8" width="1" height="1" fill="#d4d0c8"/><rect x="7" y="8" width="1" height="1" fill="#ffff00"/><rect x="8" y="8" width="1" height="1" fill="#d4d0c8"/><rect x="9" y="8" width="1" height="1" fill="#ffff00"/><rect x="10" y="8" width="1" height="1" fill="#d4d0c8"/><rect x="11" y="8" width="1" height="1" fill="#000"/><rect x="12" y="8" width="3" height="1" fill="#d4d0c8"/><rect x="15" y="8" width="1" height="1" fill="#000"/><rect x="0" y="9" width="1" height="1" fill="#80ffff"/><rect x="1" y="9" width="1" height="1" fill="#000"/><rect x="2" y="9" width="1" height="1" fill="#ffff00"/><rect x="3" y="9" width="1" height="1" fill="#d4d0c8"/><rect x="4" y="9" width="1" height="1" fill="#ffff00"/><rect x="5" y="9" width="1" height="1" fill="#d4d0c8"/><rect x="6" y="9" width="5" height="1" fill="#000"/><rect x="11" y="9" width="1" height="1" fill="#ffff00"/><rect x="12" y="9" width="1" height="1" fill="#000"/><rect x="13" y="9" width="2" height="1" fill="#d4d0c8"/><rect x="15" y="9" width="1" height="1" fill="#000"/><rect x="0" y="10" width="1" height="1" fill="#80ffff"/><rect x="1" y="10" width="1" height="1" fill="#000"/><rect x="2" y="10" width="1" height="1" fill="#d4d0c8"/><rect x="3" y="10" width="1" height="1" fill="#ffff00"/><rect x="4" y="10" width="1" height="1" fill="#d4d0c8"/><rect x="5" y="10" width="1" height="1" fill="#ffff00"/><rect x="6" y="10" width="1" height="1" fill="#d4d0c8"/><rect x="7" y="10" width="1" height="1" fill="#ffff00"/><rect x="8" y="10" width="1" height="1" fill="#d4d0c8"/><rect x="9" y="10" width="1" height="1" fill="#000"/><rect x="10" y="10" width="1" height="1" fill="#d4d0c8"/><rect x="11" y="10" width="2" height="1" fill="#000"/><rect x="13" y="10" width="2" height="1" fill="#d4d0c8"/><rect x="15" y="10" width="1" height="1" fill="#000"/><rect x="0" y="11" width="1" height="1" fill="#80ffff"/><rect x="1" y="11" width="1" height="1" fill="#000"/><rect x="2" y="11" width="1" height="1" fill="#ffff00"/><rect x="3" y="11" width="1" height="1" fill="#d4d0c8"/><rect x="4" y="11" width="1" height="1" fill="#ffff00"/><rect x="5" y="11" width="1" height="1" fill="#d4d0c8"/><rect x="6" y="11" width="3" height="1" fill="#000"/><rect x="9" y="11" width="4" height="1" fill="#d4d0c8"/><rect x="13" y="11" width="1" height="1" fill="#000"/><rect x="14" y="11" width="1" height="1" fill="#d4d0c8"/><rect x="15" y="11" width="1" height="1" fill="#000"/><rect x="0" y="12" width="1" height="1" fill="#80ffff"/><rect x="1" y="12" width="2" height="1" fill="#000"/><rect x="3" y="12" width="1" height="1" fill="#ffff00"/><rect x="4" y="12" width="1" height="1" fill="#d4d0c8"/><rect x="5" y="12" width="1" height="1" fill="#ffff00"/><rect x="6" y="12" width="1" height="1" fill="#d4d0c8"/><rect x="7" y="12" width="1" height="1" fill="#ffff00"/><rect x="8" y="12" width="1" height="1" fill="#000"/><rect x="9" y="12" width="6" height="1" fill="#d4d0c8"/><rect x="15" y="12" width="1" height="1" fill="#000"/><rect x="0" y="13" width="2" height="1" fill="#000"/><rect x="2" y="13" width="1" height="1" fill="#d4d0c8"/><rect x="3" y="13" width="6" height="1" fill="#000"/><rect x="9" y="13" width="1" height="1" fill="#d4d0c8"/><rect x="10" y="13" width="1" height="1" fill="#000"/><rect x="11" y="13" width="1" height="1" fill="#d4d0c8"/><rect x="12" y="13" width="2" height="1" fill="#000"/><rect x="14" y="13" width="1" height="1" fill="#d4d0c8"/><rect x="15" y="13" width="1" height="1" fill="#000"/><rect x="0" y="14" width="6" height="1" fill="#d4d0c8"/><rect x="6" y="14" width="1" height="1" fill="#000"/><rect x="7" y="14" width="8" height="1" fill="#d4d0c8"/><rect x="15" y="14" width="1" height="1" fill="#000"/><rect x="0" y="15" width="6" height="1" fill="#d4d0c8"/><rect x="6" y="15" width="10" height="1" fill="#000"/></svg>
<svg style="position:absolute;left:1316.7px;top:279.1px;overflow:visible" width="58.1" height="57.6" viewBox="0 0 14 14" preserveAspectRatio="none" shape-rendering="crispEdges"><rect x="1" y="0" width="1" height="1" fill="#000"/><rect x="4" y="0" width="2" height="1" fill="#000"/><rect x="9" y="0" width="2" height="1" fill="#000"/><rect x="0" y="1" width="1" height="1" fill="#000"/><rect x="2" y="1" width="1" height="1" fill="#000"/><rect x="4" y="1" width="1" height="1" fill="#000"/><rect x="6" y="1" width="1" height="1" fill="#000"/><rect x="8" y="1" width="1" height="1" fill="#000"/><rect x="0" y="2" width="3" height="1" fill="#000"/><rect x="4" y="2" width="2" height="1" fill="#000"/><rect x="8" y="2" width="1" height="1" fill="#000"/><rect x="13" y="2" width="1" height="1" fill="#000080"/><rect x="0" y="3" width="1" height="1" fill="#000"/><rect x="2" y="3" width="1" height="1" fill="#000"/><rect x="4" y="3" width="1" height="1" fill="#000"/><rect x="6" y="3" width="1" height="1" fill="#000"/><rect x="8" y="3" width="1" height="1" fill="#000"/><rect x="12" y="3" width="1" height="1" fill="#000080"/><rect x="0" y="4" width="1" height="1" fill="#000"/><rect x="2" y="4" width="1" height="1" fill="#000"/><rect x="4" y="4" width="2" height="1" fill="#000"/><rect x="9" y="4" width="2" height="1" fill="#000"/><rect x="11" y="4" width="1" height="1" fill="#000080"/><rect x="10" y="5" width="1" height="1" fill="#000080"/><rect x="9" y="6" width="1" height="1" fill="#000080"/><rect x="8" y="7" width="1" height="1" fill="#000080"/><rect x="1" y="8" width="1" height="1" fill="#000080"/><rect x="7" y="8" width="1" height="1" fill="#000080"/><rect x="0" y="9" width="3" height="1" fill="#000080"/><rect x="6" y="9" width="2" height="1" fill="#000080"/><rect x="1" y="10" width="3" height="1" fill="#000080"/><rect x="5" y="10" width="2" height="1" fill="#000080"/><rect x="2" y="11" width="5" height="1" fill="#000080"/><rect x="3" y="12" width="3" height="1" fill="#000080"/><rect x="4" y="13" width="1" height="1" fill="#000080"/></svg>
<svg style="position:absolute;left:1517.0px;top:275.0px;overflow:visible" width="62.0" height="53.6" viewBox="0 0 15 13" preserveAspectRatio="none" shape-rendering="crispEdges"><rect x="3" y="0" width="3" height="1" fill="#000"/><rect x="9" y="0" width="3" height="1" fill="#000"/><rect x="3" y="1" width="1" height="1" fill="#000"/><rect x="4" y="1" width="1" height="1" fill="#d8d8d8"/><rect x="5" y="1" width="1" height="1" fill="#000"/><rect x="9" y="1" width="1" height="1" fill="#000"/><rect x="10" y="1" width="1" height="1" fill="#d8d8d8"/><rect x="11" y="1" width="1" height="1" fill="#000"/><rect x="3" y="2" width="3" height="1" fill="#000"/><rect x="9" y="2" width="3" height="1" fill="#000"/><rect x="2" y="3" width="5" height="1" fill="#000"/><rect x="8" y="3" width="5" height="1" fill="#000"/><rect x="2" y="4" width="1" height="1" fill="#000"/><rect x="3" y="4" width="1" height="1" fill="#d8d8d8"/><rect x="4" y="4" width="3" height="1" fill="#000"/><rect x="8" y="4" width="1" height="1" fill="#000"/><rect x="9" y="4" width="1" height="1" fill="#d8d8d8"/><rect x="10" y="4" width="3" height="1" fill="#000"/><rect x="1" y="5" width="13" height="1" fill="#000"/><rect x="0" y="6" width="2" height="1" fill="#000"/><rect x="2" y="6" width="1" height="1" fill="#d8d8d8"/><rect x="3" y="6" width="3" height="1" fill="#000"/><rect x="6" y="6" width="1" height="1" fill="#d8d8d8"/><rect x="7" y="6" width="2" height="1" fill="#000"/><rect x="9" y="6" width="1" height="1" fill="#d8d8d8"/><rect x="10" y="6" width="5" height="1" fill="#000"/><rect x="0" y="7" width="2" height="1" fill="#000"/><rect x="2" y="7" width="1" height="1" fill="#d8d8d8"/><rect x="3" y="7" width="3" height="1" fill="#000"/><rect x="6" y="7" width="1" height="1" fill="#d8d8d8"/><rect x="7" y="7" width="2" height="1" fill="#000"/><rect x="9" y="7" width="1" height="1" fill="#d8d8d8"/><rect x="10" y="7" width="5" height="1" fill="#000"/><rect x="0" y="8" width="2" height="1" fill="#000"/><rect x="2" y="8" width="1" height="1" fill="#d8d8d8"/><rect x="3" y="8" width="6" height="1" fill="#000"/><rect x="9" y="8" width="1" height="1" fill="#d8d8d8"/><rect x="10" y="8" width="5" height="1" fill="#000"/><rect x="0" y="9" width="7" height="1" fill="#000"/><rect x="8" y="9" width="7" height="1" fill="#000"/><rect x="0" y="10" width="1" height="1" fill="#000"/><rect x="1" y="10" width="1" height="1" fill="#d8d8d8"/><rect x="2" y="10" width="3" height="1" fill="#000"/><rect x="10" y="10" width="1" height="1" fill="#000"/><rect x="11" y="10" width="1" height="1" fill="#d8d8d8"/><rect x="12" y="10" width="3" height="1" fill="#000"/><rect x="0" y="11" width="1" height="1" fill="#000"/><rect x="1" y="11" width="1" height="1" fill="#d8d8d8"/><rect x="2" y="11" width="3" height="1" fill="#000"/><rect x="10" y="11" width="1" height="1" fill="#000"/><rect x="11" y="11" width="1" height="1" fill="#d8d8d8"/><rect x="12" y="11" width="3" height="1" fill="#000"/><rect x="0" y="12" width="5" height="1" fill="#000"/><rect x="10" y="12" width="5" height="1" fill="#000"/></svg>
<svg style="position:absolute;left:1725.0px;top:278.8px;overflow:visible" width="54.0" height="54.1" viewBox="0 0 13 13" preserveAspectRatio="none" shape-rendering="crispEdges"><rect x="0" y="0" width="1" height="1" fill="#e8001c"/><rect x="1" y="0" width="1" height="1" fill="#800000"/><rect x="11" y="0" width="1" height="1" fill="#800000"/><rect x="12" y="0" width="1" height="1" fill="#e8001c"/><rect x="0" y="1" width="1" height="1" fill="#800000"/><rect x="1" y="1" width="1" height="1" fill="#e8001c"/><rect x="2" y="1" width="1" height="1" fill="#800000"/><rect x="3" y="1" width="1" height="1" fill="#e8001c"/><rect x="10" y="1" width="1" height="1" fill="#800000"/><rect x="11" y="1" width="1" height="1" fill="#e8001c"/><rect x="1" y="2" width="1" height="1" fill="#e8001c"/><rect x="2" y="2" width="1" height="1" fill="#800000"/><rect x="3" y="2" width="1" height="1" fill="#e8001c"/><rect x="4" y="2" width="1" height="1" fill="#800000"/><rect x="9" y="2" width="1" height="1" fill="#800000"/><rect x="10" y="2" width="1" height="1" fill="#e8001c"/><rect x="3" y="3" width="1" height="1" fill="#800000"/><rect x="4" y="3" width="1" height="1" fill="#e8001c"/><rect x="5" y="3" width="1" height="1" fill="#800000"/><rect x="8" y="3" width="1" height="1" fill="#e8001c"/><rect x="4" y="4" width="1" height="1" fill="#e8001c"/><rect x="5" y="4" width="1" height="1" fill="#800000"/><rect x="6" y="4" width="1" height="1" fill="#e8001c"/><rect x="7" y="4" width="2" height="1" fill="#800000"/><rect x="5" y="5" width="1" height="1" fill="#e8001c"/><rect x="6" y="5" width="1" height="1" fill="#800000"/><rect x="7" y="5" width="1" height="1" fill="#e8001c"/><rect x="4" y="6" width="1" height="1" fill="#800000"/><rect x="5" y="6" width="1" height="1" fill="#e8001c"/><rect x="6" y="6" width="1" height="1" fill="#800000"/><rect x="7" y="6" width="2" height="1" fill="#e8001c"/><rect x="3" y="7" width="1" height="1" fill="#800000"/><rect x="4" y="7" width="1" height="1" fill="#e8001c"/><rect x="5" y="7" width="1" height="1" fill="#800000"/><rect x="8" y="7" width="1" height="1" fill="#800000"/><rect x="9" y="7" width="1" height="1" fill="#e8001c"/><rect x="2" y="8" width="1" height="1" fill="#800000"/><rect x="3" y="8" width="2" height="1" fill="#e8001c"/><rect x="9" y="8" width="1" height="1" fill="#e8001c"/><rect x="10" y="8" width="1" height="1" fill="#800000"/><rect x="1" y="9" width="1" height="1" fill="#800000"/><rect x="2" y="9" width="1" height="1" fill="#e8001c"/><rect x="3" y="9" width="1" height="1" fill="#800000"/><rect x="10" y="9" width="1" height="1" fill="#800000"/><rect x="1" y="10" width="2" height="1" fill="#e8001c"/><rect x="3" y="10" width="1" height="1" fill="#800000"/><rect x="11" y="10" width="1" height="1" fill="#e8001c"/><rect x="2" y="11" width="1" height="1" fill="#800000"/><rect x="12" y="12" width="1" height="1" fill="#800000"/></svg>
<div class="b" style="left:1925px;top:271px;width:67px;height:62px;background:#c8c8cc"></div>
<svg style="position:absolute;left:1925.0px;top:274.8px;overflow:visible" width="67.0" height="57.9" viewBox="0 0 16 14" preserveAspectRatio="none" shape-rendering="crispEdges"><rect x="5" y="0" width="9" height="1" fill="#000"/><rect x="4" y="1" width="1" height="1" fill="#000"/><rect x="5" y="1" width="8" height="1" fill="#d0d0d0"/><rect x="13" y="1" width="1" height="1" fill="#000"/><rect x="4" y="2" width="1" height="1" fill="#000"/><rect x="5" y="2" width="1" height="1" fill="#d0d0d0"/><rect x="6" y="2" width="5" height="1" fill="#000"/><rect x="11" y="2" width="1" height="1" fill="#d0d0d0"/><rect x="12" y="2" width="1" height="1" fill="#000"/><rect x="3" y="3" width="1" height="1" fill="#000"/><rect x="4" y="3" width="8" height="1" fill="#d0d0d0"/><rect x="12" y="3" width="1" height="1" fill="#000"/><rect x="3" y="4" width="1" height="1" fill="#000"/><rect x="4" y="4" width="1" height="1" fill="#d0d0d0"/><rect x="5" y="4" width="5" height="1" fill="#000"/><rect x="10" y="4" width="1" height="1" fill="#d0d0d0"/><rect x="11" y="4" width="4" height="1" fill="#000"/><rect x="2" y="5" width="1" height="1" fill="#000"/><rect x="3" y="5" width="8" height="1" fill="#d0d0d0"/><rect x="11" y="5" width="1" height="1" fill="#000"/><rect x="12" y="5" width="1" height="1" fill="#d0d0d0"/><rect x="13" y="5" width="1" height="1" fill="#000"/><rect x="14" y="5" width="1" height="1" fill="#d0d0d0"/><rect x="15" y="5" width="1" height="1" fill="#000"/><rect x="1" y="6" width="10" height="1" fill="#000"/><rect x="11" y="6" width="1" height="1" fill="#d0d0d0"/><rect x="12" y="6" width="1" height="1" fill="#000"/><rect x="13" y="6" width="1" height="1" fill="#d0d0d0"/><rect x="14" y="6" width="2" height="1" fill="#000"/><rect x="0" y="7" width="1" height="1" fill="#000"/><rect x="1" y="7" width="10" height="1" fill="#d0d0d0"/><rect x="11" y="7" width="1" height="1" fill="#000"/><rect x="12" y="7" width="1" height="1" fill="#d0d0d0"/><rect x="13" y="7" width="1" height="1" fill="#000"/><rect x="14" y="7" width="1" height="1" fill="#d0d0d0"/><rect x="15" y="7" width="1" height="1" fill="#000"/><rect x="0" y="8" width="13" height="1" fill="#000"/><rect x="13" y="8" width="2" height="1" fill="#d0d0d0"/><rect x="15" y="8" width="1" height="1" fill="#000"/><rect x="0" y="9" width="1" height="1" fill="#000"/><rect x="1" y="9" width="6" height="1" fill="#d0d0d0"/><rect x="7" y="9" width="3" height="1" fill="#808080"/><rect x="10" y="9" width="2" height="1" fill="#d0d0d0"/><rect x="12" y="9" width="1" height="1" fill="#000"/><rect x="13" y="9" width="1" height="1" fill="#d0d0d0"/><rect x="14" y="9" width="1" height="1" fill="#000"/><rect x="0" y="10" width="1" height="1" fill="#000"/><rect x="1" y="10" width="6" height="1" fill="#d0d0d0"/><rect x="7" y="10" width="3" height="1" fill="#ffff00"/><rect x="10" y="10" width="2" height="1" fill="#d0d0d0"/><rect x="12" y="10" width="3" height="1" fill="#000"/><rect x="0" y="11" width="13" height="1" fill="#000"/><rect x="13" y="11" width="1" height="1" fill="#d0d0d0"/><rect x="14" y="11" width="1" height="1" fill="#000"/><rect x="1" y="12" width="1" height="1" fill="#000"/><rect x="2" y="12" width="9" height="1" fill="#d0d0d0"/><rect x="11" y="12" width="1" height="1" fill="#000"/><rect x="12" y="12" width="1" height="1" fill="#d0d0d0"/><rect x="13" y="12" width="1" height="1" fill="#000"/><rect x="2" y="13" width="11" height="1" fill="#000"/></svg>
<svg style="position:absolute;left:2129.0px;top:275.0px;overflow:visible" width="66.8" height="61.7" viewBox="0 0 16 15" preserveAspectRatio="none" shape-rendering="crispEdges"><rect x="1" y="0" width="8" height="1" fill="#000"/><rect x="1" y="1" width="2" height="1" fill="#000"/><rect x="8" y="1" width="1" height="1" fill="#000"/><rect x="1" y="2" width="1" height="1" fill="#000"/><rect x="2" y="2" width="1" height="1" fill="#808020"/><rect x="3" y="2" width="1" height="1" fill="#000"/><rect x="8" y="2" width="1" height="1" fill="#000"/><rect x="13" y="2" width="1" height="1" fill="#000090"/><rect x="1" y="3" width="1" height="1" fill="#000"/><rect x="2" y="3" width="2" height="1" fill="#808020"/><rect x="4" y="3" width="1" height="1" fill="#000"/><rect x="8" y="3" width="1" height="1" fill="#000"/><rect x="12" y="3" width="2" height="1" fill="#000090"/><rect x="1" y="4" width="1" height="1" fill="#000"/><rect x="2" y="4" width="3" height="1" fill="#808020"/><rect x="5" y="4" width="1" height="1" fill="#000"/><rect x="8" y="4" width="1" height="1" fill="#000"/><rect x="11" y="4" width="5" height="1" fill="#000090"/><rect x="1" y="5" width="1" height="1" fill="#000"/><rect x="2" y="5" width="3" height="1" fill="#808020"/><rect x="5" y="5" width="1" height="1" fill="#000"/><rect x="8" y="5" width="1" height="1" fill="#000"/><rect x="10" y="5" width="6" height="1" fill="#000090"/><rect x="1" y="6" width="1" height="1" fill="#000"/><rect x="2" y="6" width="3" height="1" fill="#808020"/><rect x="5" y="6" width="1" height="1" fill="#000"/><rect x="8" y="6" width="1" height="1" fill="#000"/><rect x="11" y="6" width="5" height="1" fill="#000090"/><rect x="1" y="7" width="1" height="1" fill="#000"/><rect x="2" y="7" width="3" height="1" fill="#808020"/><rect x="5" y="7" width="1" height="1" fill="#000"/><rect x="8" y="7" width="1" height="1" fill="#000"/><rect x="12" y="7" width="2" height="1" fill="#000090"/><rect x="1" y="8" width="1" height="1" fill="#000"/><rect x="2" y="8" width="2" height="1" fill="#808020"/><rect x="4" y="8" width="2" height="1" fill="#000"/><rect x="8" y="8" width="1" height="1" fill="#000"/><rect x="13" y="8" width="1" height="1" fill="#000090"/><rect x="1" y="9" width="1" height="1" fill="#000"/><rect x="2" y="9" width="3" height="1" fill="#808020"/><rect x="5" y="9" width="1" height="1" fill="#000"/><rect x="8" y="9" width="1" height="1" fill="#000"/><rect x="0" y="10" width="2" height="1" fill="#000"/><rect x="2" y="10" width="3" height="1" fill="#808020"/><rect x="5" y="10" width="8" height="1" fill="#000"/><rect x="2" y="11" width="1" height="1" fill="#000"/><rect x="3" y="11" width="2" height="1" fill="#808020"/><rect x="5" y="11" width="1" height="1" fill="#000"/><rect x="3" y="12" width="1" height="1" fill="#000"/><rect x="4" y="12" width="1" height="1" fill="#808020"/><rect x="5" y="12" width="1" height="1" fill="#000"/><rect x="4" y="13" width="2" height="1" fill="#000"/><rect x="5" y="14" width="1" height="1" fill="#000"/></svg>
<div class="b" style="left:692px;top:384px;width:32px;height:3px;background:#000;"></div>
<div class="b" style="left:855px;top:384px;width:29px;height:3px;background:#000;"></div>
<div class="b" style="left:1105px;top:384px;width:26px;height:3px;background:#000;"></div>
<div class="b" style="left:1297px;top:384px;width:26px;height:3px;background:#000;"></div>
<div class="b" style="left:1508px;top:384px;width:22px;height:3px;background:#000;"></div>
<div class="b" style="left:1692px;top:384px;width:29px;height:3px;background:#000;"></div>
<div class="b" style="left:1913px;top:384px;width:26px;height:3px;background:#000;"></div>
<div class="b" style="left:2157px;top:384px;width:28px;height:3px;background:#e8001c;"></div>
<div class="b" style="left:3979px;top:1712px;width:13px;height:38px;background:#000"></div>
<div class="b" style="left:3967px;top:1725px;width:37px;height:12px;background:#000"></div>
<div class="b" style="left:3983px;top:1716px;width:5px;height:30px;background:#8c8c8c"></div>
<div class="b" style="left:3971px;top:1729px;width:29px;height:4px;background:#8c8c8c"></div>
<div class="b" style="left:4079px;top:1700px;width:67px;height:66px;background:#c8c8cc"></div>
<svg style="position:absolute;left:4079.1px;top:1704.0px;overflow:visible" width="66.5" height="54.0" viewBox="0 0 16 13" preserveAspectRatio="none" shape-rendering="crispEdges"><rect x="9" y="0" width="3" height="1" fill="#000"/><rect x="8" y="1" width="1" height="1" fill="#000"/><rect x="12" y="1" width="1" height="1" fill="#000"/><rect x="14" y="1" width="1" height="1" fill="#000"/><rect x="13" y="2" width="2" height="1" fill="#000"/><rect x="1" y="3" width="3" height="1" fill="#000"/><rect x="12" y="3" width="3" height="1" fill="#000"/><rect x="0" y="4" width="1" height="1" fill="#000"/><rect x="1" y="4" width="1" height="1" fill="#ffff00"/><rect x="3" y="4" width="1" height="1" fill="#ffff00"/><rect x="4" y="4" width="7" height="1" fill="#000"/><rect x="0" y="5" width="1" height="1" fill="#000"/><rect x="2" y="5" width="1" height="1" fill="#ffff00"/><rect x="4" y="5" width="1" height="1" fill="#ffff00"/><rect x="6" y="5" width="1" height="1" fill="#ffff00"/><rect x="8" y="5" width="1" height="1" fill="#ffff00"/><rect x="10" y="5" width="1" height="1" fill="#000"/><rect x="0" y="6" width="1" height="1" fill="#000"/><rect x="1" y="6" width="1" height="1" fill="#ffff00"/><rect x="3" y="6" width="1" height="1" fill="#ffff00"/><rect x="5" y="6" width="1" height="1" fill="#ffff00"/><rect x="7" y="6" width="1" height="1" fill="#ffff00"/><rect x="9" y="6" width="1" height="1" fill="#ffff00"/><rect x="10" y="6" width="1" height="1" fill="#000"/><rect x="0" y="7" width="1" height="1" fill="#000"/><rect x="2" y="7" width="1" height="1" fill="#ffff00"/><rect x="4" y="7" width="1" height="1" fill="#ffff00"/><rect x="5" y="7" width="11" height="1" fill="#000"/><rect x="0" y="8" width="1" height="1" fill="#000"/><rect x="1" y="8" width="1" height="1" fill="#ffff00"/><rect x="3" y="8" width="1" height="1" fill="#ffff00"/><rect x="4" y="8" width="1" height="1" fill="#000"/><rect x="5" y="8" width="9" height="1" fill="#848418"/><rect x="14" y="8" width="1" height="1" fill="#000"/><rect x="0" y="9" width="1" height="1" fill="#000"/><rect x="2" y="9" width="1" height="1" fill="#ffff00"/><rect x="3" y="9" width="1" height="1" fill="#000"/><rect x="4" y="9" width="9" height="1" fill="#848418"/><rect x="13" y="9" width="1" height="1" fill="#000"/><rect x="0" y="10" width="1" height="1" fill="#000"/><rect x="1" y="10" width="1" height="1" fill="#ffff00"/><rect x="2" y="10" width="1" height="1" fill="#000"/><rect x="3" y="10" width="9" height="1" fill="#848418"/><rect x="12" y="10" width="1" height="1" fill="#000"/><rect x="0" y="11" width="2" height="1" fill="#000"/><rect x="2" y="11" width="9" height="1" fill="#848418"/><rect x="11" y="11" width="1" height="1" fill="#000"/><rect x="0" y="12" width="11" height="1" fill="#000"/></svg>
<svg style="position:absolute;left:4110px;top:1808px;overflow:visible" width="40" height="28" viewBox="0 0 40 28"><polygon fill="#fff" points="24,8 40,24 8,24" transform="translate(0,0)"/><polygon fill="#a0a0a0" points="21.5,4 36,20.4 7,20.4"/></svg>
<svg style="position:absolute;left:4110px;top:2724px;overflow:visible" width="40" height="24" viewBox="0 0 40 24"><polygon fill="#a0a0a0" points="4,4 36,4 20,20"/></svg>
<svg style="position:absolute;left:4104px;top:1550px;overflow:visible" width="38" height="26" viewBox="0 0 38 26"><polygon fill="#a0a0a0" points="4,6 34,6 19,20"/></svg>
<svg style="position:absolute;left:4096px;top:318px;overflow:visible" width="40" height="26" viewBox="0 0 40 26"><polyline fill="none" stroke="#707070" stroke-width="3.5" points="4,6 20,20 36,6"/></svg>
<svg style="position:absolute;left:4160px;top:172px;overflow:visible" width="50" height="43" viewBox="0 0 50 43"><path d="M11,10 L39,33 M39,10 L11,33" stroke="#44506a" stroke-width="17" stroke-linecap="butt"/><path d="M12,11 L38,32 M38,11 L12,32" stroke="#f4f4f4" stroke-width="10" stroke-linecap="butt"/></svg>
</body></html>
